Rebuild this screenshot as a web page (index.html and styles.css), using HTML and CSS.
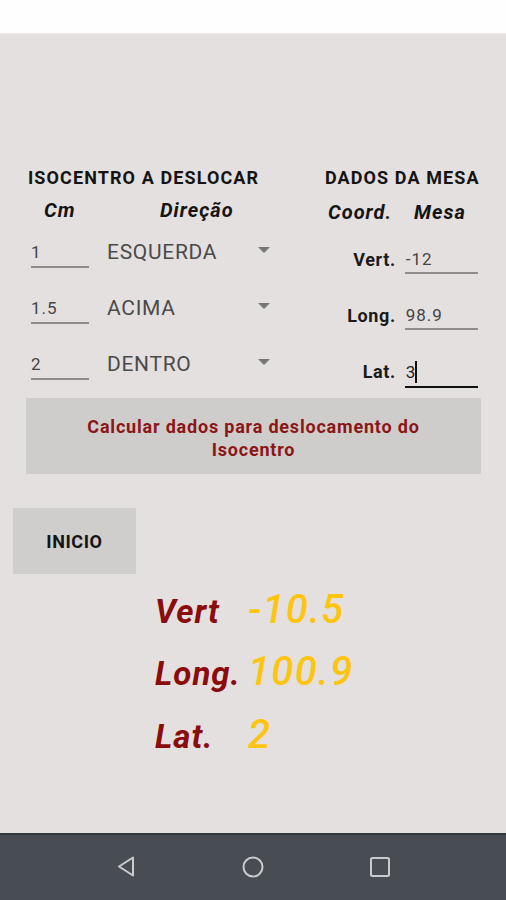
FILE: index.html
```html
<!DOCTYPE html>
<html lang="pt">
<head>
<meta charset="utf-8">
<title>Isocentro</title>
<link rel="stylesheet" href="styles.css">
</head>
<body>
<div class="status"></div>
<main class="screen">
  <section class="top">
    <div class="left">
      <h2 class="title">ISOCENTRO A DESLOCAR</h2>
      <div class="subhead left-sub"><span class="sub-cm">Cm</span><span class="sub-dir">Direção</span></div>
      <div class="lrow">
        <div class="field f-left">1</div>
        <div class="spinner"><span>ESQUERDA</span><span class="arrow"></span></div>
      </div>
      <div class="lrow">
        <div class="field f-left">1.5</div>
        <div class="spinner"><span>ACIMA</span><span class="arrow"></span></div>
      </div>
      <div class="lrow">
        <div class="field f-left">2</div>
        <div class="spinner"><span>DENTRO</span><span class="arrow"></span></div>
      </div>
    </div>
    <div class="right">
      <h2 class="title">DADOS DA MESA</h2>
      <div class="subhead right-sub"><span>Coord.</span><span>Mesa</span></div>
      <div class="rrow rfirst"><span class="rlabel">Vert.</span><div class="field f-right">-12</div></div>
      <div class="rrow"><span class="rlabel">Long.</span><div class="field f-right">98.9</div></div>
      <div class="rrow"><span class="rlabel">Lat.</span><div class="field f-right focused">3<span class="caret"></span></div></div>
    </div>
  </section>
  <button class="calc">Calcular dados para deslocamento do<br>Isocentro</button>
  <button class="inicio">INICIO</button>
  <div class="results">
    <span class="rl">Vert</span><span class="rv">-10.5</span>
    <span class="rl">Long.</span><span class="rv">100.9</span>
    <span class="rl">Lat.</span><span class="rv">2</span>
  </div>
</main>
<nav class="navbar">
  <svg class="nav-icon" width="24" height="24" viewBox="0 0 24 24"><path d="M19 2.5 L5 11.5 L19 20.5 Z" fill="none" stroke="#c9cbcd" stroke-width="2" stroke-linejoin="round"/></svg>
  <svg class="nav-icon" width="24" height="24" viewBox="0 0 24 24"><circle cx="12" cy="12" r="9.5" fill="none" stroke="#c9cbcd" stroke-width="2"/></svg>
  <svg class="nav-icon" width="24" height="24" viewBox="0 0 24 24"><rect x="3" y="3" width="18" height="18" rx="1.5" fill="none" stroke="#c9cbcd" stroke-width="2"/></svg>
</nav>
</body>
</html>
```
FILE: styles.css
```css
* { box-sizing: border-box; }
html, body { margin: 0; padding: 0; }
body {
  width: 506px;
  height: 900px;
  font-family: Roboto, "Noto Sans", sans-serif;
  background: #e4e0df;
  overflow: hidden;
}
.status {
  height: 34px;
  background: #fefefe;
  border-bottom: 1px solid #efeceb;
}
.screen {
  height: 799px;
  background: #e4e0df;
  display: flex;
  flex-direction: column;
}
.top {
  display: flex;
  padding-top: 134px;
}
.title {
  margin: 0;
  font-size: 18px;
  font-weight: 700;
  line-height: 20px;
  color: #141414;
  letter-spacing: 1.1px;
  white-space: nowrap;
}
.left {
  width: 297px;
  padding-left: 28px;
}
.subhead {
  display: flex;
  font-style: italic;
  font-weight: 700;
  font-size: 20px;
  line-height: 24px;
  color: #141414;
  letter-spacing: 1px;
}
.left-sub { margin-top: 10px; }
.sub-cm { margin-left: 16px; width: 116px; }
.lrow {
  height: 56px;
  display: flex;
  align-items: flex-start;
}
.field {
  font-size: 17px;
  color: #444;
  line-height: 20px;
  border-bottom: 2px solid #8e8c8c;
  letter-spacing: 1px;
}
.f-left {
  width: 58px;
  margin-left: 3px;
  padding-top: 20px;
  padding-bottom: 4px;
}
.spinner {
  display: flex;
  align-items: center;
  justify-content: space-between;
  width: 163px;
  margin-left: 18px;
  padding-top: 19px;
  font-size: 21px;
  line-height: 22px;
  color: #4a4a4a;
  letter-spacing: 0.7px;
}
.arrow {
  width: 0;
  height: 0;
  border-left: 6px solid transparent;
  border-right: 6px solid transparent;
  border-top: 6px solid #777;
  margin-top: -4px;
}
.right {
  padding-left: 28px;
}
.right-sub {
  margin-top: 12px;
  margin-left: 3px;
  gap: 22px;
}
.rrow {
  height: 56px;
  display: flex;
  justify-content: flex-end;
  align-items: flex-start;
}
.rfirst { margin-top: 6px; }
.rlabel {
  padding-top: 20px;
  font-weight: 700;
  font-size: 18px;
  line-height: 20px;
  color: #1a1a1a;
  margin-right: 9px;
  letter-spacing: 0.6px;
}
.f-right {
  width: 73px;
  padding-top: 19px;
  padding-left: 1px;
  padding-bottom: 3px;
  margin-right: 2px;
}
.focused {
  color: #222;
  border-bottom-color: #111;
}
.caret {
  display: inline-block;
  width: 2px;
  height: 22px;
  background: #111;
  vertical-align: -5px;
  margin-left: -1px;
}
.calc {
  margin: 0 25px 0 26px;
  height: 76px;
  border: none;
  background: #cfcccc;
  color: #8b1616;
  font-family: Roboto, "Noto Sans", sans-serif;
  font-weight: 700;
  font-size: 18px;
  line-height: 23px;
  letter-spacing: 0.8px;
  padding: 3px 0 0 0;
}
.inicio {
  margin: 34px 0 0 13px;
  width: 123px;
  height: 66px;
  border: none;
  background: #d0cdcd;
  color: #141414;
  font-family: Roboto, "Noto Sans", sans-serif;
  font-weight: 700;
  font-size: 18px;
  letter-spacing: 0.6px;
  padding: 0;
}
.results {
  display: grid;
  grid-template-columns: 93px auto;
  grid-auto-rows: 62.5px;
  align-items: center;
  margin-top: 6px;
  padding-left: 155px;
}
.rl {
  font-style: italic;
  font-weight: 700;
  font-size: 33px;
  color: #8a0c0c;
  letter-spacing: 1px;
}
.rv {
  font-style: italic;
  font-weight: 500;
  font-size: 40px;
  color: #fdc410;
  margin-top: -4px;
  letter-spacing: 1.3px;
}
.navbar {
  height: 67px;
  background: #474d52;
  border-top: 2px solid #2e3a3b;
  display: flex;
  align-items: center;
  justify-content: center;
  gap: 103px;
  padding-bottom: 2px;
}
```
